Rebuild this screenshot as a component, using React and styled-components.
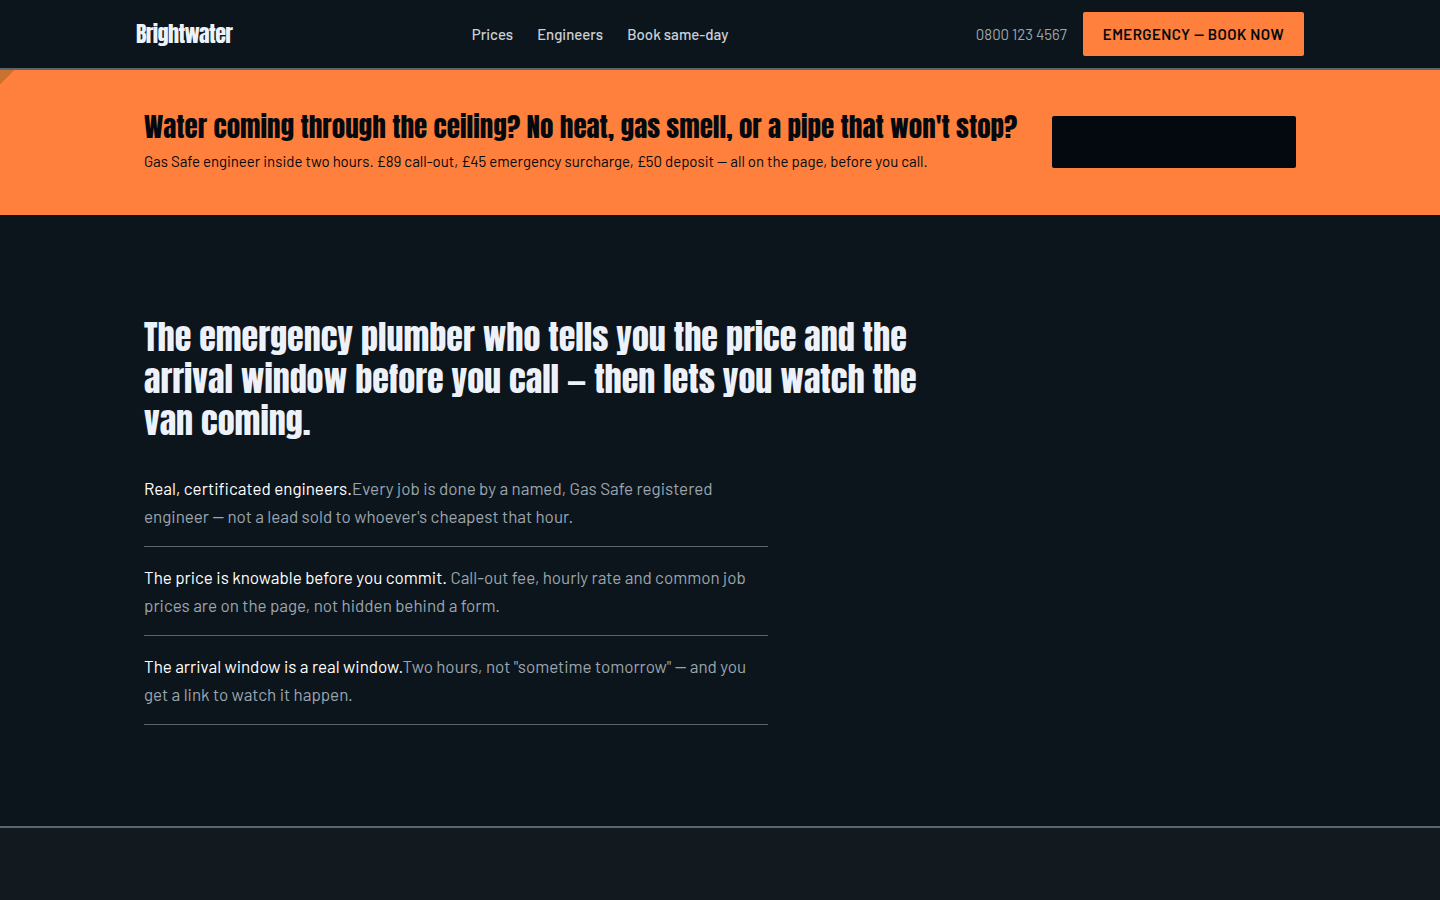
import React from "react";
import styled, { createGlobalStyle, ThemeProvider } from "styled-components";

const theme = {
  bg: "#0d151c",
  surface: "#121a20",
  line: "#5b646f",
  text: "#edf2fa",
  nav: "#c9d0d8",
  muted: "#9ba5ae",
  orange: "#ff803c",
  ink: "#03090f",
  display: '"Anton", "Roboto Condensed", sans-serif',
  body: '"Barlow", "Roboto", sans-serif',
};

const GlobalStyle = createGlobalStyle`
  *, *::before, *::after { box-sizing: border-box; }
  body {
    margin: 0;
    background: ${theme.bg};
    color: ${theme.text};
    font-family: ${theme.body};
    font-size: 17px;
    line-height: 28px;
  }
`;

const Page = styled.div`
  display: flex;
  flex-direction: column;
  min-height: 100vh;
`;

const Header = styled.header`
  border-bottom: 2px solid ${({ theme }) => theme.line};
`;

const HeaderInner = styled.div`
  display: flex;
  align-items: center;
  justify-content: space-between;
  max-width: 1200px;
  margin: 0 auto;
  padding: 12px 16px;
`;

const Logo = styled.a`
  font-family: ${({ theme }) => theme.display};
  font-size: 22px;
  line-height: 38px;
  letter-spacing: -0.03em;
  color: ${({ theme }) => theme.text};
  text-decoration: none;
`;

const Nav = styled.nav`
  display: flex;
  gap: 24px;
`;

const NavLink = styled.a`
  font-size: 15px;
  font-weight: 500;
  line-height: 24px;
  color: ${({ theme }) => theme.nav};
  text-decoration: none;
`;

const HeaderActions = styled.div`
  display: flex;
  align-items: center;
  gap: 16px;
  padding-left: 8px;
`;

const Phone = styled.a`
  font-size: 15px;
  line-height: 24px;
  color: ${({ theme }) => theme.muted};
  text-decoration: none;
`;

const Button = styled.button`
  min-width: ${({ $wide }) => ($wide ? "244px" : "0")};
  height: ${({ $wide }) => ($wide ? "52px" : "44px")};
  padding: 0 20px;
  border: 0;
  border-radius: 2px;
  background: ${({ $wide, theme }) => ($wide ? theme.ink : theme.orange)};
  color: ${({ theme }) => theme.ink};
  font-family: inherit;
  font-size: 15px;
  font-weight: 600;
  letter-spacing: 0.03em;
  text-transform: uppercase;
  white-space: nowrap;
  flex-shrink: 0;
  cursor: pointer;
`;

const Banner = styled.section`
  background:
    linear-gradient(135deg, rgba(60, 80, 20, 0.28) 10px, transparent 10px),
    ${({ theme }) => theme.orange};
  color: ${({ theme }) => theme.ink};
`;

const BannerInner = styled.div`
  display: flex;
  align-items: center;
  justify-content: space-between;
  gap: 24px;
  max-width: 1200px;
  margin: 0 auto;
  padding: 40px 24px 41px;
`;

const BannerTitle = styled.h2`
  margin: 0 0 4px;
  font-family: ${({ theme }) => theme.display};
  font-size: 27px;
  font-weight: 400;
  line-height: 34px;
`;

const BannerText = styled.p`
  margin: 0;
  font-size: 15px;
  line-height: 26px;
`;

const Hero = styled.main`
  width: 100%;
  max-width: 1200px;
  margin: 0 auto;
  padding: 101px 24px;
`;

const HeroTitle = styled.h1`
  max-width: 800px;
  margin: 0 0 16px;
  font-family: ${({ theme }) => theme.display};
  font-size: 34px;
  font-weight: 400;
  line-height: 42px;
`;

const Points = styled.ul`
  max-width: 624px;
  margin: 0;
  padding: 0;
  list-style: none;
`;

const Point = styled.li`
  padding: 16px 0;
  border-bottom: 1px solid ${({ theme }) => theme.line};
  color: ${({ theme }) => theme.muted};
`;

const Lead = styled.strong`
  font-weight: 400;
  color: #fff;
`;

const NextSection = styled.section`
  flex: 1;
  border-top: 2px solid ${({ theme }) => theme.line};
  background: ${({ theme }) => theme.surface};
`;

const links = ["Prices", "Engineers", "Book same-day"];

const points = [
  ["Real, certificated engineers.", "Every job is done by a named, Gas Safe registered engineer — not a lead sold to whoever's cheapest that hour."],
  ["The price is knowable before you commit.", " Call-out fee, hourly rate and common job prices are on the page, not hidden behind a form."],
  ["The arrival window is a real window.", "Two hours, not \"sometime tomorrow\" — and you get a link to watch it happen."],
];

export default function App() {
  return (
    <ThemeProvider theme={theme}>
      <GlobalStyle />
      <Page>
        <Header>
          <HeaderInner>
            <Logo href="#">Brightwater</Logo>
            <Nav>
              {links.map((label) => (
                <NavLink key={label} href="#">{label}</NavLink>
              ))}
            </Nav>
            <HeaderActions>
              <Phone href="tel:08001234567">0800 123 4567</Phone>
              <Button type="button">Emergency — book now</Button>
            </HeaderActions>
          </HeaderInner>
        </Header>
        <Banner>
          <BannerInner>
            <div>
              <BannerTitle>Water coming through the ceiling? No heat, gas smell, or a pipe that won't stop?</BannerTitle>
              <BannerText>Gas Safe engineer inside two hours. £89 call-out, £45 emergency surcharge, £50 deposit — all on the page, before you call.</BannerText>
            </div>
            <Button type="button" $wide />
          </BannerInner>
        </Banner>
        <Hero>
          <HeroTitle>
            The emergency plumber who tells you the price and the arrival window before you call — then lets you watch the van coming.
          </HeroTitle>
          <Points>
            {points.map(([lead, rest]) => (
              <Point key={lead}><Lead>{lead}</Lead>{rest}</Point>
            ))}
          </Points>
        </Hero>
        <NextSection />
      </Page>
    </ThemeProvider>
  );
}
